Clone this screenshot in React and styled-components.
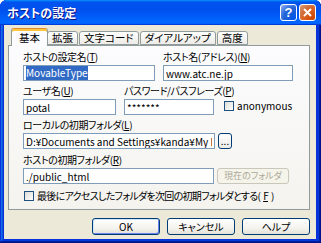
import React from 'react';
import styled, { createGlobalStyle } from 'styled-components';

const GlobalStyle = createGlobalStyle`
  html, body {
    margin: 0;
    padding: 0;
    background: #ffffff;
  }
  body {
    font-family: "Noto Sans CJK JP", "Liberation Sans", sans-serif;
    font-size: 10px;
    font-feature-settings: "palt";
    color: #000;
  }
`;

const Window = styled.div`
  width: 321px;
  height: 243px;
  box-sizing: border-box;
  display: flex;
  flex-direction: column;
  background: #0831d9;
  border-radius: 7px 7px 0 0;
  overflow: hidden;
  box-shadow: inset -1px -1px #00138c, inset 1px 1px #0831d9, inset -2px -2px #001ea0,
    inset 2px 2px #166aee, inset -3px -3px #003bda, inset 3px 3px #0855dd;
`;

const TitleBar = styled.div`
  height: 25px;
  flex: none;
  display: flex;
  align-items: center;
  padding: 0 5px 0 7px;
  background: linear-gradient(180deg, #0997ff, #0053ee 8%, #0050ee 40%, #06f 88%, #06f 93%, #005bff 95%, #003dd7 96%, #003dd7);
`;

const Title = styled.div`
  flex: 1;
  color: #fff;
  font-weight: bold;
  font-size: 12px;
  line-height: 14px;
  text-shadow: 1px 1px #0f1089;
`;

const CaptionButton = styled.div`
  width: 17px;
  height: 17px;
  box-sizing: border-box;
  margin-left: ${(p) => (p.$gap ? '2px' : '0')};
  border: 1px solid #fff;
  border-radius: 3px;
  display: flex;
  align-items: center;
  justify-content: center;
  color: #fff;
  font-family: "Liberation Sans", sans-serif;
  font-weight: bold;
  font-size: 13px;
  background: ${(p) =>
    p.$close
      ? 'radial-gradient(circle at 90% 90%, #cc4600 0%, #dc6527 55%, #cd7546 70%, #e8a07a 100%)'
      : 'radial-gradient(circle at 90% 90%, #0054e9 0%, #2263d5 55%, #4479e4 70%, #a3bbec 100%)'};
`;

const Body = styled.div`
  flex: 1;
  margin: 0 5px 4px 4px;
  background: #ece9d8;
  display: flex;
  flex-direction: column;
`;

const TabList = styled.div`
  display: flex;
  align-items: flex-end;
  margin: 3px 0 0 7px;
  height: 17px;
  position: relative;
  z-index: 1;
`;

const Tab = styled.div`
  box-sizing: border-box;
  height: ${(p) => (p.$active ? '18px' : '14px')};
  margin: ${(p) => (p.$active ? '0 -1px -1px 0' : '0 1px 0 0')};
  padding: ${(p) => (p.$active ? '0 7px' : '0 4px')};
  border: 1px solid #919b9c;
  border-bottom: ${(p) => (p.$active ? 'none' : '1px solid #919b9c')};
  border-top-color: ${(p) => (p.$active ? '#e68b2c' : '#919b9c')};
  border-radius: 3px 3px 0 0;
  background: ${(p) => (p.$active ? '#fcfcfe' : 'linear-gradient(#ffffff, #ecebe6)')};
  box-shadow: ${(p) => (p.$active ? 'inset 0 2px #ffc73c' : 'none')};
  line-height: ${(p) => (p.$active ? '17px' : '12px')};
  font-size: 10.5px;
  white-space: nowrap;
`;

const Panel = styled.div`
  height: 165px;
  box-sizing: border-box;
  margin: 0 6px 0 4px;
  border: 1px solid #919b9c;
  background: linear-gradient(#fcfcfe, #f4f3ee);
  padding: 4px 0 0 14px;
  display: flex;
  flex-direction: column;
`;

const Row = styled.div`
  display: flex;
  align-items: flex-end;
  gap: ${(p) => p.$gap || 0}px;
  margin-top: ${(p) => p.$top || 0}px;
`;

const Field = styled.div`
  display: flex;
  flex-direction: column;
  width: ${(p) => p.$w}px;
`;

const Label = styled.div`
  height: 15px;
  line-height: 14px;
  letter-spacing: -0.4px;
  white-space: nowrap;
`;

const Input = styled.div`
  height: 16px;
  box-sizing: border-box;
  width: 100%;
  border: 1px solid #7f9db9;
  background: #fff;
  padding: 0 2px;
  line-height: 14px;
  white-space: nowrap;
  overflow: hidden;
`;

const TextInput = styled.input`
  height: 16px;
  box-sizing: border-box;
  width: 100%;
  margin: 0;
  border: 1px solid #7f9db9;
  background: #fff;
  padding: 0 2px;
  font: inherit;
  font-feature-settings: "palt";
  line-height: 14px;
  outline: none;
`;

const Selected = styled.span`
  background: #316ac5;
  color: #fff;
`;

const Check = styled.div`
  width: 10px;
  height: 10px;
  box-sizing: border-box;
  flex: none;
  border: 1px solid #1c5180;
  background: linear-gradient(135deg, #dcdcd7, #ffffff);
`;

const CheckLine = styled.label`
  display: flex;
  align-items: center;
  gap: ${(p) => p.$gap || 3}px;
  line-height: 14px;
  letter-spacing: ${(p) => (p.$tight ? '-0.7px' : '0')};
  white-space: nowrap;
  margin: ${(p) => p.$margin || 0};
`;

const SmallButton = styled.div`
  height: 16px;
  width: ${(p) => p.$w}px;
  box-sizing: border-box;
  border: 1px solid ${(p) => (p.$disabled ? '#c9c7ba' : '#003c74')};
  border-radius: 3px;
  background: ${(p) => (p.$disabled ? '#f5f4ea' : 'linear-gradient(#ffffff, #ecebe6)')};
  color: ${(p) => (p.$disabled ? '#aca899' : '#000')};
  display: flex;
  align-items: center;
  justify-content: center;
  line-height: 12px;
  font-size: ${(p) => (p.$disabled ? '9px' : '10px')};
  white-space: nowrap;
`;

const Footer = styled.div`
  display: flex;
  justify-content: flex-end;
  gap: 7px;
  margin: 8px 6px 0 0;
`;

const Button = styled.div`
  width: 68px;
  height: 17px;
  box-sizing: border-box;
  border: 1px solid #003c74;
  border-radius: 3px;
  background: linear-gradient(#ffffff, #f4f3ee 60%, #e3e1d8);
  box-shadow: ${(p) => (p.$default ? 'inset 1px 1px #cee7ff, inset -1px -1px #6982ee' : 'none')};
  display: flex;
  align-items: center;
  justify-content: center;
  line-height: 13px;
  font-size: 10px;
`;

const tabs = ['基本', '拡張', '文字コード', 'ダイアルアップ', '高度'];

export default function App() {
  return (
    <>
      <GlobalStyle />
      <Window>
        <TitleBar>
          <Title>ホストの設定</Title>
          <CaptionButton>?</CaptionButton>
          <CaptionButton $close $gap>
            <svg width="9" height="9" viewBox="0 0 9 9">
              <path d="M1 1 L8 8 M8 1 L1 8" stroke="#fff" strokeWidth="2" />
            </svg>
          </CaptionButton>
        </TitleBar>
        <Body>
          <TabList>
            {tabs.map((t, i) => (
              <Tab key={t} $active={i === 0}>
                {t}
              </Tab>
            ))}
          </TabList>
          <Panel>
            <Row $gap={8}>
              <Field $w={132}>
                <Label>ホストの設定名(<u>T</u>)</Label>
                <Input>
                  <Selected>MovableType</Selected>
                </Input>
              </Field>
              <Field $w={130}>
                <Label>ホスト名(アドレス)(<u>N</u>)</Label>
                <TextInput readOnly value="www.atc.ne.jp" />
              </Field>
            </Row>
            <Row $gap={8} $top={3}>
              <Field $w={93}>
                <Label>ユーザ名(<u>U</u>)</Label>
                <TextInput readOnly value="potal" />
              </Field>
              <Field $w={90}>
                <Label>パスワード/パスフレーズ(<u>P</u>)</Label>
                <TextInput readOnly value="*******" />
              </Field>
              <CheckLine $margin="0 0 2px 2px">
                <Check />
                anonymous
              </CheckLine>
            </Row>
            <Row $gap={3} $top={3}>
              <Field $w={192}>
                <Label>ローカルの初期フォルダ(<u>L</u>)</Label>
                <TextInput readOnly value="D:¥Documents and Settings¥kanda¥My Documents" />
              </Field>
              <SmallButton $w={14}>...</SmallButton>
            </Row>
            <Row $gap={3} $top={4}>
              <Field $w={191}>
                <Label>ホストの初期フォルダ(<u>R</u>)</Label>
                <TextInput readOnly value="./public_html" />
              </Field>
              <SmallButton $w={72} $disabled>
                現在のフォルダ
              </SmallButton>
            </Row>
            <CheckLine $gap={3} $tight $margin="5px 0 0 1px">
              <Check />
              最後にアクセスしたフォルダを次回の初期フォルダとする(<u>F</u>)
            </CheckLine>
          </Panel>
          <Footer>
            <Button $default>OK</Button>
            <Button>キャンセル</Button>
            <Button>ヘルプ</Button>
          </Footer>
        </Body>
      </Window>
    </>
  );
}
